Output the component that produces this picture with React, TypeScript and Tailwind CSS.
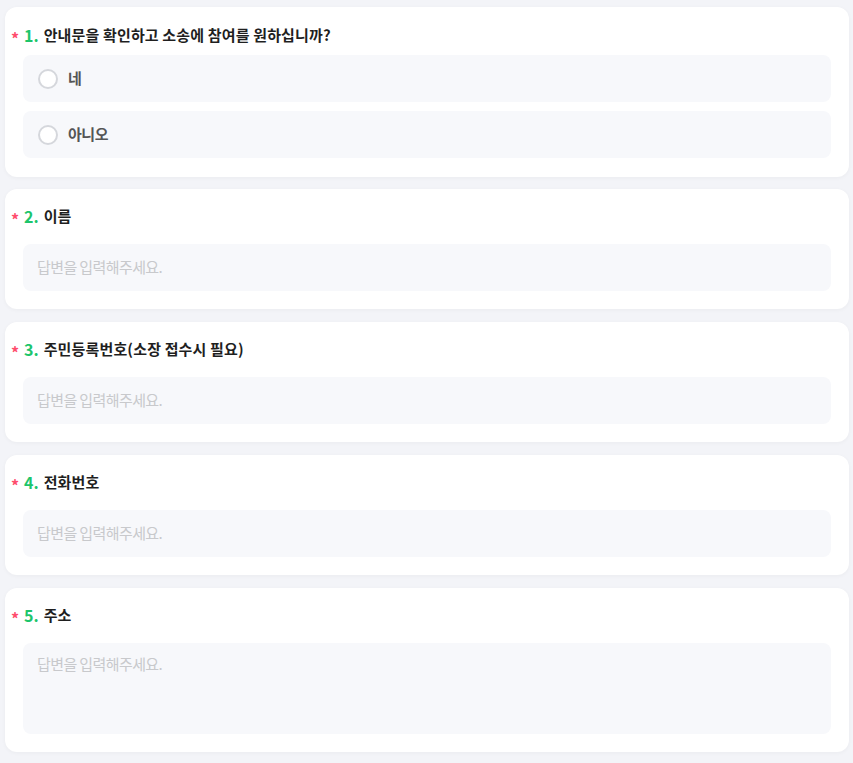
const FONT = { fontFamily: '"Noto Sans CJK KR", "Noto Sans", sans-serif' }

type Question = {
  no: number
  title: string
  kind: 'radio' | 'input' | 'textarea'
  options?: string[]
}

const questions: Question[] = [
  { no: 1, title: '안내문을 확인하고 소송에 참여를 원하십니까?', kind: 'radio', options: ['네', '아니오'] },
  { no: 2, title: '이름', kind: 'input' },
  { no: 3, title: '주민등록번호(소장 접수시 필요)', kind: 'input' },
  { no: 4, title: '전화번호', kind: 'input' },
  { no: 5, title: '주소', kind: 'textarea' },
]

function Title({ no, title }: { no: number; title: string }) {
  return (
    <div className="flex items-center h-[22px] text-[15px] font-bold text-[#1f1f1f]">
      <span className="w-[13px] flex items-center">
        <span className="inline-block text-[#ff4d6d] text-[16px] font-bold leading-none translate-y-[3px]">*</span>
      </span>
      <span className="text-[#1dc56b] text-[16px] mr-[5px]">{no}.</span>
      <span className="tracking-[0.01em]">{title}</span>
    </div>
  )
}

function QuestionCard({ q }: { q: Question }) {
  return (
    <div
      className={`bg-white rounded-xl shadow-[0_1px_4px_rgba(0,0,0,0.04)] px-[6px] ${
        q.kind === 'radio' ? 'pt-[17px] pb-[19px]' : 'pt-[16px] pb-[18px]'
      }`}
    >
      <Title no={q.no} title={q.title} />
      {q.kind === 'radio' && (
        <div className="mt-[9px] mx-3 flex flex-col gap-[9px]">
          {q.options?.map((o) => (
            <label key={o} className="flex items-center h-[47px] rounded-lg bg-[#f7f8fb] pl-[15px] gap-[10px] cursor-pointer">
              <span className="w-5 h-5 rounded-full border-2 border-[#d5d7dc] bg-white" />
              <span className="text-[15px] font-semibold text-[#555] tracking-[-0.03em]">{o}</span>
            </label>
          ))}
        </div>
      )}
      {q.kind === 'input' && (
        <div className="mt-[17px] mx-3 h-[47px] rounded-lg bg-[#f7f8fb] flex items-center px-[14px]">
          <span className="text-[15px] text-[#c8c9cc] tracking-[-0.04em]">답변을 입력해주세요.</span>
        </div>
      )}
      {q.kind === 'textarea' && (
        <div className="mt-[17px] mx-3 h-[91px] rounded-lg bg-[#f7f8fb] px-[14px] pt-[8px]">
          <span className="text-[15px] text-[#c8c9cc] tracking-[-0.04em]">답변을 입력해주세요.</span>
        </div>
      )}
    </div>
  )
}

export default function App() {
  return (
    <div className="min-h-[763px] bg-[#f3f4f8] px-[5px] pt-[7px] pb-[10px]" style={FONT}>
      <div className="flex flex-col w-[844px]">
        {questions.map((q, i) => (
          <div key={q.no} className={i === 0 ? '' : i === 1 ? 'mt-3' : 'mt-[13px]'}>
            <QuestionCard q={q} />
          </div>
        ))}
      </div>
    </div>
  )
}
